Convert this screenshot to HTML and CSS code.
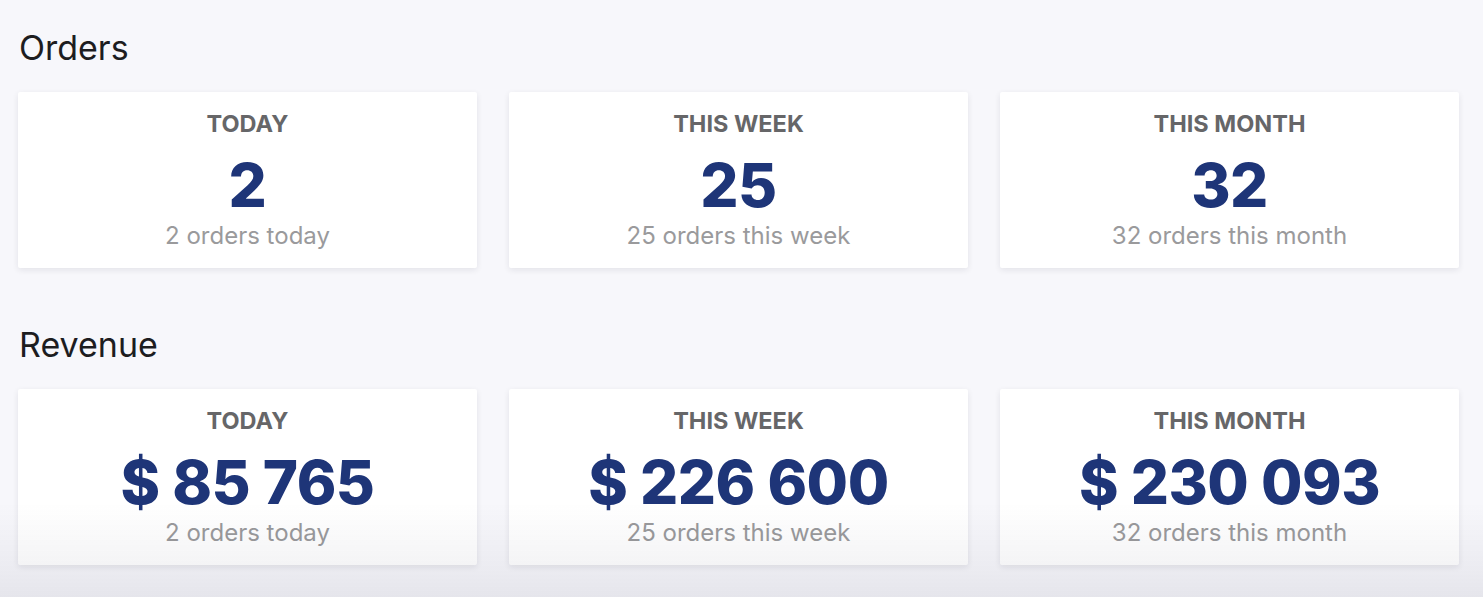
FILE: index.html
```html
<!DOCTYPE html>
<html lang="en">
<head>
<meta charset="utf-8">
<title>Dashboard</title>
<link rel="stylesheet" href="styles.css">
</head>
<body>
<main class="page">
  <section class="section">
    <h2 class="section-title">Orders</h2>
    <div class="cards">
      <div class="card">
        <div class="card-label">TODAY</div>
        <div class="card-value">2</div>
        <div class="card-sub">2 orders today</div>
      </div>
      <div class="card">
        <div class="card-label">THIS WEEK</div>
        <div class="card-value">25</div>
        <div class="card-sub">25 orders this week</div>
      </div>
      <div class="card">
        <div class="card-label">THIS MONTH</div>
        <div class="card-value">32</div>
        <div class="card-sub">32 orders this month</div>
      </div>
    </div>
  </section>
  <section class="section">
    <h2 class="section-title">Revenue</h2>
    <div class="cards">
      <div class="card">
        <div class="card-label">TODAY</div>
        <div class="card-value">$ 85 765</div>
        <div class="card-sub">2 orders today</div>
      </div>
      <div class="card">
        <div class="card-label">THIS WEEK</div>
        <div class="card-value">$ 226 600</div>
        <div class="card-sub">25 orders this week</div>
      </div>
      <div class="card">
        <div class="card-label">THIS MONTH</div>
        <div class="card-value">$ 230 093</div>
        <div class="card-sub">32 orders this month</div>
      </div>
    </div>
  </section>
</main>
<div class="bottom-fade"></div>
</body>
</html>
```

FILE: styles.css
```css
html, body {
  margin: 0;
  padding: 0;
  height: 100%;
  overflow: hidden;
}

body {
  background: #f7f7fb;
  font-family: Inter, "Noto Sans", "Liberation Sans", sans-serif;
  color: #1d1d1f;
}

.page {
  padding: 28px 24px 0 18px;
  display: flex;
  flex-direction: column;
  gap: 57px;
}

.section-title {
  margin: 0 0 24px 1px;
  font-size: 34px;
  line-height: 40px;
  font-weight: 400;
  color: #1d1d1f;
}

.cards {
  display: grid;
  grid-template-columns: repeat(3, 1fr);
  gap: 32px;
}

.card {
  background: #ffffff;
  height: 176px;
  box-sizing: border-box;
  padding-top: 18px;
  display: flex;
  flex-direction: column;
  align-items: center;
  box-shadow: 0 2px 6px rgba(20, 20, 40, 0.09);
  border-radius: 2px;
}

.card-label {
  font-size: 23.5px;
  line-height: 28px;
  font-weight: 700;
  color: #666668;
}

.card-value {
  margin-top: 17px;
  font-size: 60px;
  line-height: 60px;
  font-weight: 800;
  color: #1e3578;
  letter-spacing: -0.5px;
}

.card-sub {
  margin-top: 7px;
  font-size: 24px;
  line-height: 28px;
  color: #9a9a9c;
}

.bottom-fade {
  position: fixed;
  left: 0;
  right: 0;
  bottom: 0;
  height: 95px;
  pointer-events: none;
  background: linear-gradient(to bottom, rgba(30, 30, 60, 0) 0%, rgba(30, 30, 60, 0.05) 70%, rgba(30, 30, 60, 0.08) 100%);
}
```
